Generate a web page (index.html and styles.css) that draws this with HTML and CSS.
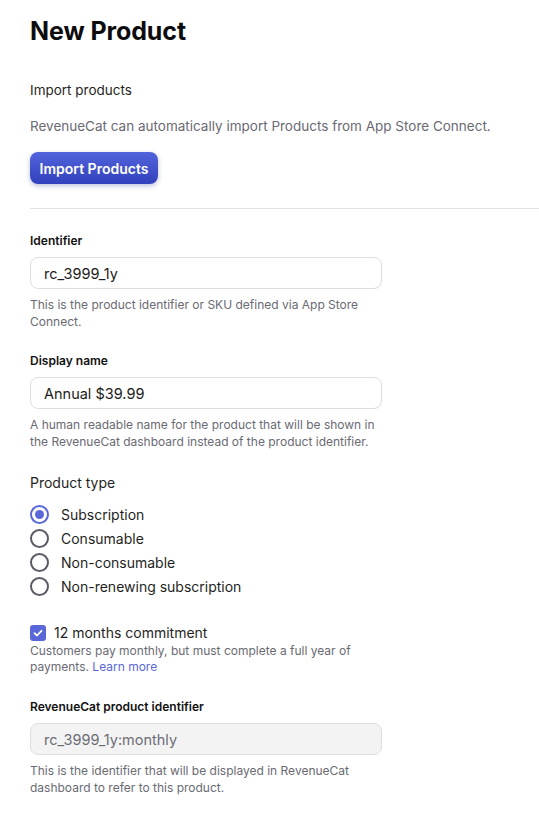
FILE: index.html
```html
<!DOCTYPE html>
<html>
<head>
<meta charset="utf-8">
<link rel="stylesheet" href="styles.css">
</head>
<body>
<main class="page">
  <h1 class="title">New Product</h1>

  <section class="import">
    <div class="import-heading">Import products</div>
    <p class="import-desc">RevenueCat can automatically import Products from App Store Connect.</p>
    <button class="btn-primary">Import Products</button>
  </section>

  <hr class="divider">

  <div class="field">
    <label class="field-label">Identifier</label>
    <div class="input">rc_3999_1y</div>
    <p class="help">This is the product identifier or SKU defined via App Store Connect.</p>
  </div>

  <div class="field">
    <label class="field-label">Display name</label>
    <div class="input">Annual $39.99</div>
    <p class="help">A human readable name for the product that will be shown in the RevenueCat dashboard instead of the product identifier.</p>
  </div>

  <div class="type">
    <div class="type-heading">Product type</div>
    <div class="radios">
      <div class="radio-row"><span class="radio checked"></span><span>Subscription</span></div>
      <div class="radio-row"><span class="radio"></span><span>Consumable</span></div>
      <div class="radio-row"><span class="radio"></span><span>Non-consumable</span></div>
      <div class="radio-row"><span class="radio"></span><span>Non-renewing subscription</span></div>
    </div>
  </div>

  <div class="commit">
    <div class="check-row">
      <span class="checkbox"><svg viewBox="0 0 16 16" width="16" height="16"><path d="M4.5 8.2 L7 10.5 L11.5 5.8" fill="none" stroke="#fff" stroke-width="1.8" stroke-linecap="round" stroke-linejoin="round"/></svg></span>
      <span>12 months commitment</span>
    </div>
    <div class="commit-help">
      <div>Customers pay monthly, but must complete a full year of</div>
      <div>payments. <a class="link">Learn more</a></div>
    </div>
  </div>

  <div class="field">
    <label class="field-label">RevenueCat product identifier</label>
    <div class="input disabled">rc_3999_1y:monthly</div>
    <p class="help">This is the identifier that will be displayed in RevenueCat dashboard to refer to this product.</p>
  </div>
</main>
</body>
</html>
```

FILE: styles.css
```css
* { box-sizing: border-box; }
html, body { margin: 0; padding: 0; background: #fff; }
body {
  font-family: Inter, "Noto Sans", sans-serif;
  color: #1a1a1f;
}
.page {
  padding: 15px 0 0 30px;
  display: flex;
  flex-direction: column;
}
.title {
  margin: 0;
  font-size: 25px;
  font-weight: 700;
  line-height: 32px;
  letter-spacing: -0.1px;
  color: #0c0c0e;
}
.import { margin-top: 33px; display: flex; flex-direction: column; align-items: flex-start; }
.import-heading { font-size: 13.5px; line-height: 20px; color: #1f1f24; }
.import-desc { margin: 16px 0 0; font-size: 13.5px; line-height: 20px; color: #6a6a73; }
.btn-primary {
  margin-top: 16px;
  width: 128px;
  height: 32px;
  border: none;
  border-radius: 8px;
  background: linear-gradient(#5264dc, #3141bd);
  color: #fff;
  font-family: inherit;
  font-size: 14px;
  font-weight: 600;
  box-shadow: 0 2px 5px rgba(40, 50, 140, 0.3);
  padding: 0;
}
.divider {
  margin: 24px 0 0;
  border: none;
  border-top: 1px solid #e1e1e4;
  height: 0;
}
.field { margin-top: 23px; display: flex; flex-direction: column; }
.divider + .field { margin-top: 24px; }
.field-label { font-size: 12px; font-weight: 600; line-height: 16px; color: #111; }
.input {
  margin-top: 8px;
  width: 352px;
  height: 32px;
  border: 1px solid #dedee2;
  border-radius: 8px;
  padding: 0 13px;
  display: flex;
  align-items: center;
  font-size: 14.5px;
  color: #1c1c20;
}
.input.disabled { background: #f3f3f4; color: #6d6d74; }
.help {
  margin: 7px 0 0;
  width: 352px;
  font-size: 12px;
  line-height: 17px;
  color: #6a6a73;
}
.type { margin-top: 23px; }
.type-heading { font-size: 14px; line-height: 20px; color: #1f1f24; }
.radios { margin-top: 9px; display: flex; flex-direction: column; }
.radio-row { display: flex; align-items: center; gap: 12px; height: 24px; font-size: 14px; color: #1f1f24; }
.radio {
  width: 19px; height: 19px;
  border: 2px solid #5b5b66;
  border-radius: 50%;
  display: flex; align-items: center; justify-content: center;
  flex: none;
}
.radio.checked { border-color: #5a67d8; }
.radio.checked::after {
  content: ""; width: 9px; height: 9px; border-radius: 50%; background: #5a67d8;
}
.commit { margin-top: 25px; }
.check-row { display: flex; align-items: center; gap: 8px; font-size: 14px; line-height: 20px; color: #1f1f24; }
.checkbox {
  width: 16px; height: 16px; border-radius: 3px; background: #5a67d8;
  display: flex; flex: none;
}
.commit-help { width: 352px; font-size: 12px; line-height: 16px; color: #6a6a73; }
.link { color: #5a67d8; }
.commit + .field { margin-top: 24px; }
```
